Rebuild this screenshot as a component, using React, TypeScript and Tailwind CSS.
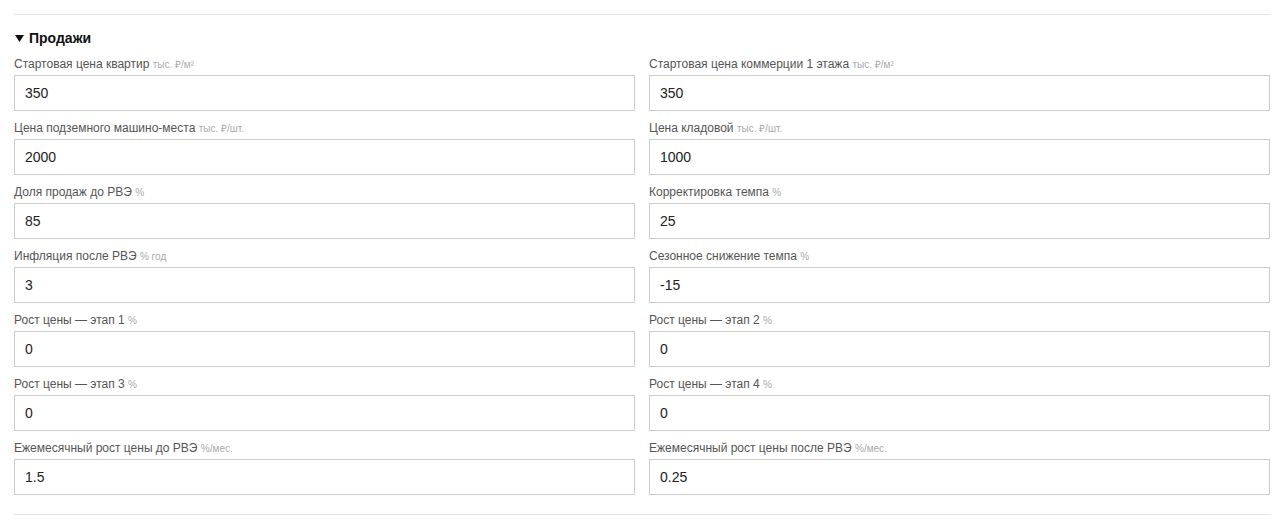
import React from "react";

type Field = { label: string; unit: string; value: string };

const fields: Field[] = [
  { label: "Стартовая цена квартир", unit: "тыс. ₽/м²", value: "350" },
  { label: "Стартовая цена коммерции 1 этажа", unit: "тыс. ₽/м²", value: "350" },
  { label: "Цена подземного машино-места", unit: "тыс. ₽/шт.", value: "2000" },
  { label: "Цена кладовой", unit: "тыс. ₽/шт.", value: "1000" },
  { label: "Доля продаж до РВЭ", unit: "%", value: "85" },
  { label: "Корректировка темпа", unit: "%", value: "25" },
  { label: "Инфляция после РВЭ", unit: "% год", value: "3" },
  { label: "Сезонное снижение темпа", unit: "%", value: "-15" },
  { label: "Рост цены — этап 1", unit: "%", value: "0" },
  { label: "Рост цены — этап 2", unit: "%", value: "0" },
  { label: "Рост цены — этап 3", unit: "%", value: "0" },
  { label: "Рост цены — этап 4", unit: "%", value: "0" },
  { label: "Ежемесячный рост цены до РВЭ", unit: "%/мес.", value: "1.5" },
  { label: "Ежемесячный рост цены после РВЭ", unit: "%/мес.", value: "0.25" },
];

function FieldRow({ f }: { f: Field }) {
  return (
    <label className="flex flex-col mb-[10px]">
      <span className="h-[14px] text-[12px] leading-[14px] text-[#555] mb-[4px] whitespace-nowrap">
        {f.label}{" "}
        <span className="text-[10px] leading-[10px] text-[#aaa]">{f.unit}</span>
      </span>
      <input
        defaultValue={f.value}
        className="h-[36px] border border-[#ccc] px-[10px] text-[14px] text-[#222] bg-white outline-none font-['Liberation_Sans',Arial,sans-serif]"
      />
    </label>
  );
}

export default function App() {
  return (
    <div className="bg-white w-[1284px] h-[528px] px-[14px] pt-[14px] font-['Liberation_Sans',Arial,sans-serif]">
      <section className="border-t border-b border-[#e5e5e5] pt-[15px] pb-[9px]">
        <h3 className="h-[16px] text-[14px] leading-[16px] font-bold text-[#111] mb-[11px] flex items-center">
          {/* disclosure marker, open state */}
          <svg width="9" height="7" viewBox="0 0 9 7" className="ml-[1px] mr-[5px] mt-[1px]">
            <path d="M0 0 H9 L4.5 7 Z" fill="#111" />
          </svg>
          Продажи
        </h3>
        <div className="grid grid-cols-2 gap-x-[14px]">
          {fields.map((f) => (
            <FieldRow key={f.label} f={f} />
          ))}
        </div>
      </section>
    </div>
  );
}
